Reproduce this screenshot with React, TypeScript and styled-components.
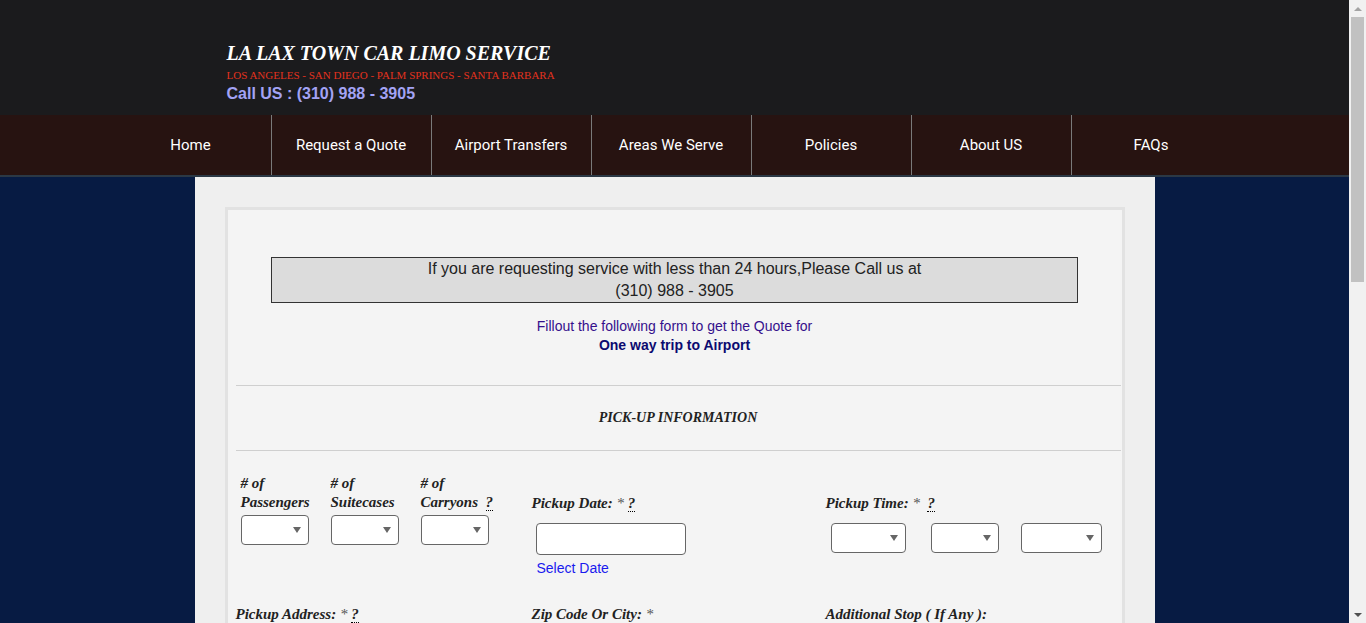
import React from "react";
import styled, { createGlobalStyle } from "styled-components";

const GlobalStyle = createGlobalStyle`
  html, body { margin: 0; padding: 0; height: 100%; overflow: hidden; }
  body {
    background: #071b43;
    font-family: "Liberation Sans", Arial, sans-serif;
  }
`;

const Viewport = styled.div`
  height: 100vh;
  display: flex;
  overflow: hidden;
  background: #071b43;
`;

const Page = styled.div`
  flex: 1;
  min-width: 0;
  height: 100%;
  overflow: hidden;
`;

const ScrollRail = styled.div`
  width: 17px;
  height: 100%;
  flex: none;
  background: #f1f1f1;
  display: flex;
  flex-direction: column;
`;

const ScrollArrow = styled.div<{ $dir: "up" | "down"; $color: string }>`
  height: 17px;
  flex: none;
  display: flex;
  align-items: center;
  justify-content: center;
  &::before {
    content: "";
    border-left: 4px solid transparent;
    border-right: 4px solid transparent;
    ${(p) =>
      p.$dir === "up"
        ? `border-bottom: 4px solid ${p.$color};`
        : `border-top: 4px solid ${p.$color};`}
  }
`;

const ScrollThumb = styled.div`
  height: 265px;
  margin: 0 2px;
  background: #c1c1c1;
  flex: none;
`;

const ScrollSpace = styled.div`
  flex: 1;
`;

const Header = styled.header`
  background: #1b1b1d;
  height: 115px;
  box-sizing: border-box;
  padding-top: 40px;
`;

const HeaderInner = styled.div`
  width: 960px;
  margin: 0 auto;
  padding-left: 32px;
  box-sizing: border-box;
`;

const Title = styled.h1`
  margin: 0;
  font-family: "Liberation Serif", "Times New Roman", serif;
  font-weight: bold;
  font-style: italic;
  font-size: 20px;
  line-height: 26px;
  color: #ffffff;
`;

const Tagline = styled.div`
  margin-top: 2px;
  font-family: "Liberation Serif", "Times New Roman", serif;
  font-size: 11px;
  line-height: 14px;
  color: #e3321e;
`;

const CallLine = styled.div`
  margin-top: 3px;
  font-size: 16px;
  line-height: 18px;
  font-weight: bold;
  color: #a3a3f5;
`;

const Nav = styled.nav`
  background: #271311;
  height: 60px;
  border-bottom: 2px solid #2b3845;
`;

const NavList = styled.ul`
  list-style: none;
  margin: 0 auto;
  padding: 0 8px 0 0;
  width: 1128px;
  height: 60px;
  display: flex;
  box-sizing: border-box;
`;

const NavItem = styled.li<{ $first?: boolean }>`
  width: 160px;
  height: 60px;
  box-sizing: border-box;
  border-left: ${(p) => (p.$first ? "none" : "1px solid #7a7a7a")};
  display: flex;
  align-items: center;
  justify-content: center;
  color: #ffffff;
  font-family: Roboto, "Noto Sans", sans-serif;
  font-size: 15px;
`;

const Main = styled.main`
  width: 960px;
  margin: 0 auto;
  background: #efefef;
  padding: 30px;
  box-sizing: border-box;
`;

const Panel = styled.section`
  border: 3px solid #e2e2e2;
  background: #f4f4f4;
  padding: 47px 0 60px;
`;

const Notice = styled.div`
  width: 807px;
  margin: 0 auto;
  box-sizing: border-box;
  border: 1px solid #333333;
  background: #dcdcdc;
  text-align: center;
  font-size: 16px;
  line-height: 22px;
  color: #222222;
`;

const Intro = styled.p`
  margin: 14px 0 0;
  text-align: center;
  font-size: 14px;
  line-height: 19px;
  color: #34108c;
`;

const IntroStrong = styled.strong`
  display: block;
  color: #0c0a70;
`;

const FormSection = styled.div`
  margin: 30px 1px 0 8px;
`;

const Rule = styled.hr`
  margin: 0;
  border: 0;
  border-top: 1px solid #cfcfcf;
`;

const SectionTitle = styled.h3`
  margin: 0;
  padding: 22px 0;
  text-align: center;
  font-family: "Liberation Serif", "Times New Roman", serif;
  font-weight: bold;
  font-style: italic;
  font-size: 14px;
  line-height: 20px;
  color: #222222;
`;

const Row = styled.div<{ $top: number }>`
  display: grid;
  grid-template-columns: 296px 294px 295px;
  padding-top: ${(p) => p.$top}px;
`;

const Cell = styled.div``;

const Counts = styled.div`
  display: grid;
  grid-template-columns: 90px 90px 90px;
  padding-left: 5px;
`;

const Label = styled.label<{ $lead?: number }>`
  display: block;
  font-family: "Liberation Serif", "Times New Roman", serif;
  font-weight: bold;
  font-style: italic;
  font-size: 15px;
  line-height: 19px;
  color: #222222;
  padding-top: ${(p) => p.$lead ?? 0}px;
  white-space: nowrap;
`;

const Star = styled.span`
  font-weight: normal;
  color: #555555;
`;

const Help = styled.abbr`
  text-decoration: none;
  border-bottom: 1px dotted #000;
  cursor: help;
`;

const SelectBox = styled.div<{ $w: number; $mt?: number; $ml?: number }>`
  position: relative;
  width: ${(p) => p.$w}px;
  height: 30px;
  margin-top: ${(p) => p.$mt ?? 0}px;
  margin-left: ${(p) => p.$ml ?? 0}px;
  &::after {
    content: "";
    position: absolute;
    right: 8px;
    top: 12px;
    border-left: 4px solid transparent;
    border-right: 4px solid transparent;
    border-top: 6px solid #666666;
    pointer-events: none;
  }
`;

const Select = styled.select`
  appearance: none;
  -webkit-appearance: none;
  width: 100%;
  height: 100%;
  box-sizing: border-box;
  border: 1px solid #666666;
  border-radius: 4px;
  background: #ffffff;
  font-size: 14px;
`;

const TimeSelects = styled.div`
  display: flex;
`;

const TextInput = styled.input<{ $w: number; $ml?: number; $mt?: number }>`
  display: block;
  width: ${(p) => p.$w}px;
  height: 32px;
  box-sizing: border-box;
  margin-left: ${(p) => p.$ml ?? 0}px;
  margin-top: ${(p) => p.$mt ?? 0}px;
  border: 1px solid #666666;
  border-radius: 4px;
  background: #ffffff;
  font-size: 14px;
`;

const DateLink = styled.a`
  display: block;
  margin: 5px 0 0 5px;
  font-size: 14px;
  line-height: 16px;
  color: #1a1aee;
  text-decoration: none;
`;

const Drop = ({ w, mt, ml }: { w: number; mt?: number; ml?: number }) => (
  <SelectBox $w={w} $mt={mt} $ml={ml}>
    <Select defaultValue="">
      <option value=""></option>
    </Select>
  </SelectBox>
);

const navItems = [
  "Home",
  "Request a Quote",
  "Airport Transfers",
  "Areas We Serve",
  "Policies",
  "About US",
  "FAQs",
];

export default function App() {
  return (
    <Viewport>
      <GlobalStyle />
      <Page>
        <Header>
          <HeaderInner>
            <Title>LA LAX TOWN CAR LIMO SERVICE</Title>
            <Tagline>LOS ANGELES - SAN DIEGO - PALM SPRINGS - SANTA BARBARA</Tagline>
            <CallLine>Call US : (310) 988 - 3905</CallLine>
          </HeaderInner>
        </Header>
        <Nav>
          <NavList>
            {navItems.map((n, i) => (
              <NavItem key={n} $first={i === 0}>
                {n}
              </NavItem>
            ))}
          </NavList>
        </Nav>
        <Main>
          <Panel>
            <Notice>
              If you are requesting service with less than 24 hours,Please Call us at
              <br />
              (310) 988 - 3905
            </Notice>
            <Intro>
              Fillout the following form to get the Quote for
              <IntroStrong>One way trip to Airport</IntroStrong>
            </Intro>
            <FormSection>
              <Rule />
              <SectionTitle>PICK-UP INFORMATION</SectionTitle>
              <Rule />
              <Row $top={23}>
                <Counts>
                  <div>
                    <Label>
                      # of
                      <br />
                      Passengers
                    </Label>
                    <Drop w={68} mt={3} />
                  </div>
                  <div>
                    <Label>
                      # of
                      <br />
                      Suitecases
                    </Label>
                    <Drop w={68} mt={3} />
                  </div>
                  <div>
                    <Label>
                      # of
                      <br />
                      Carryons &nbsp;<Help title="Help">?</Help>
                    </Label>
                    <Drop w={68} mt={3} />
                  </div>
                </Counts>
                <Cell>
                  <Label $lead={20}>
                    Pickup Date: <Star>*</Star> <Help title="Help">?</Help>
                  </Label>
                  <TextInput $w={150} $ml={4} $mt={10} />
                  <DateLink href="#">Select Date</DateLink>
                </Cell>
                <Cell>
                  <Label $lead={20}>
                    Pickup Time: <Star>*</Star> &nbsp;<Help title="Help">?</Help>
                  </Label>
                  <TimeSelects>
                    <Drop w={75} mt={10} ml={5} />
                    <Drop w={68} mt={10} ml={25} />
                    <Drop w={81} mt={10} ml={22} />
                  </TimeSelects>
                </Cell>
              </Row>
              <Row $top={29}>
                <Cell>
                  <Label>
                    Pickup Address: <Star>*</Star> <Help title="Help">?</Help>
                  </Label>
                  <TextInput $w={250} $mt={8} />
                </Cell>
                <Cell>
                  <Label>
                    Zip Code Or City: <Star>*</Star>
                  </Label>
                  <TextInput $w={250} $mt={8} />
                </Cell>
                <Cell>
                  <Label>Additional Stop ( If Any ):</Label>
                  <TextInput $w={250} $mt={8} />
                </Cell>
              </Row>
            </FormSection>
          </Panel>
        </Main>
      </Page>
      <ScrollRail aria-hidden="true">
        <ScrollArrow $dir="up" $color="#a3a3a3" />
        <ScrollThumb />
        <ScrollSpace />
        <ScrollArrow $dir="down" $color="#505050" />
      </ScrollRail>
    </Viewport>
  );
}
